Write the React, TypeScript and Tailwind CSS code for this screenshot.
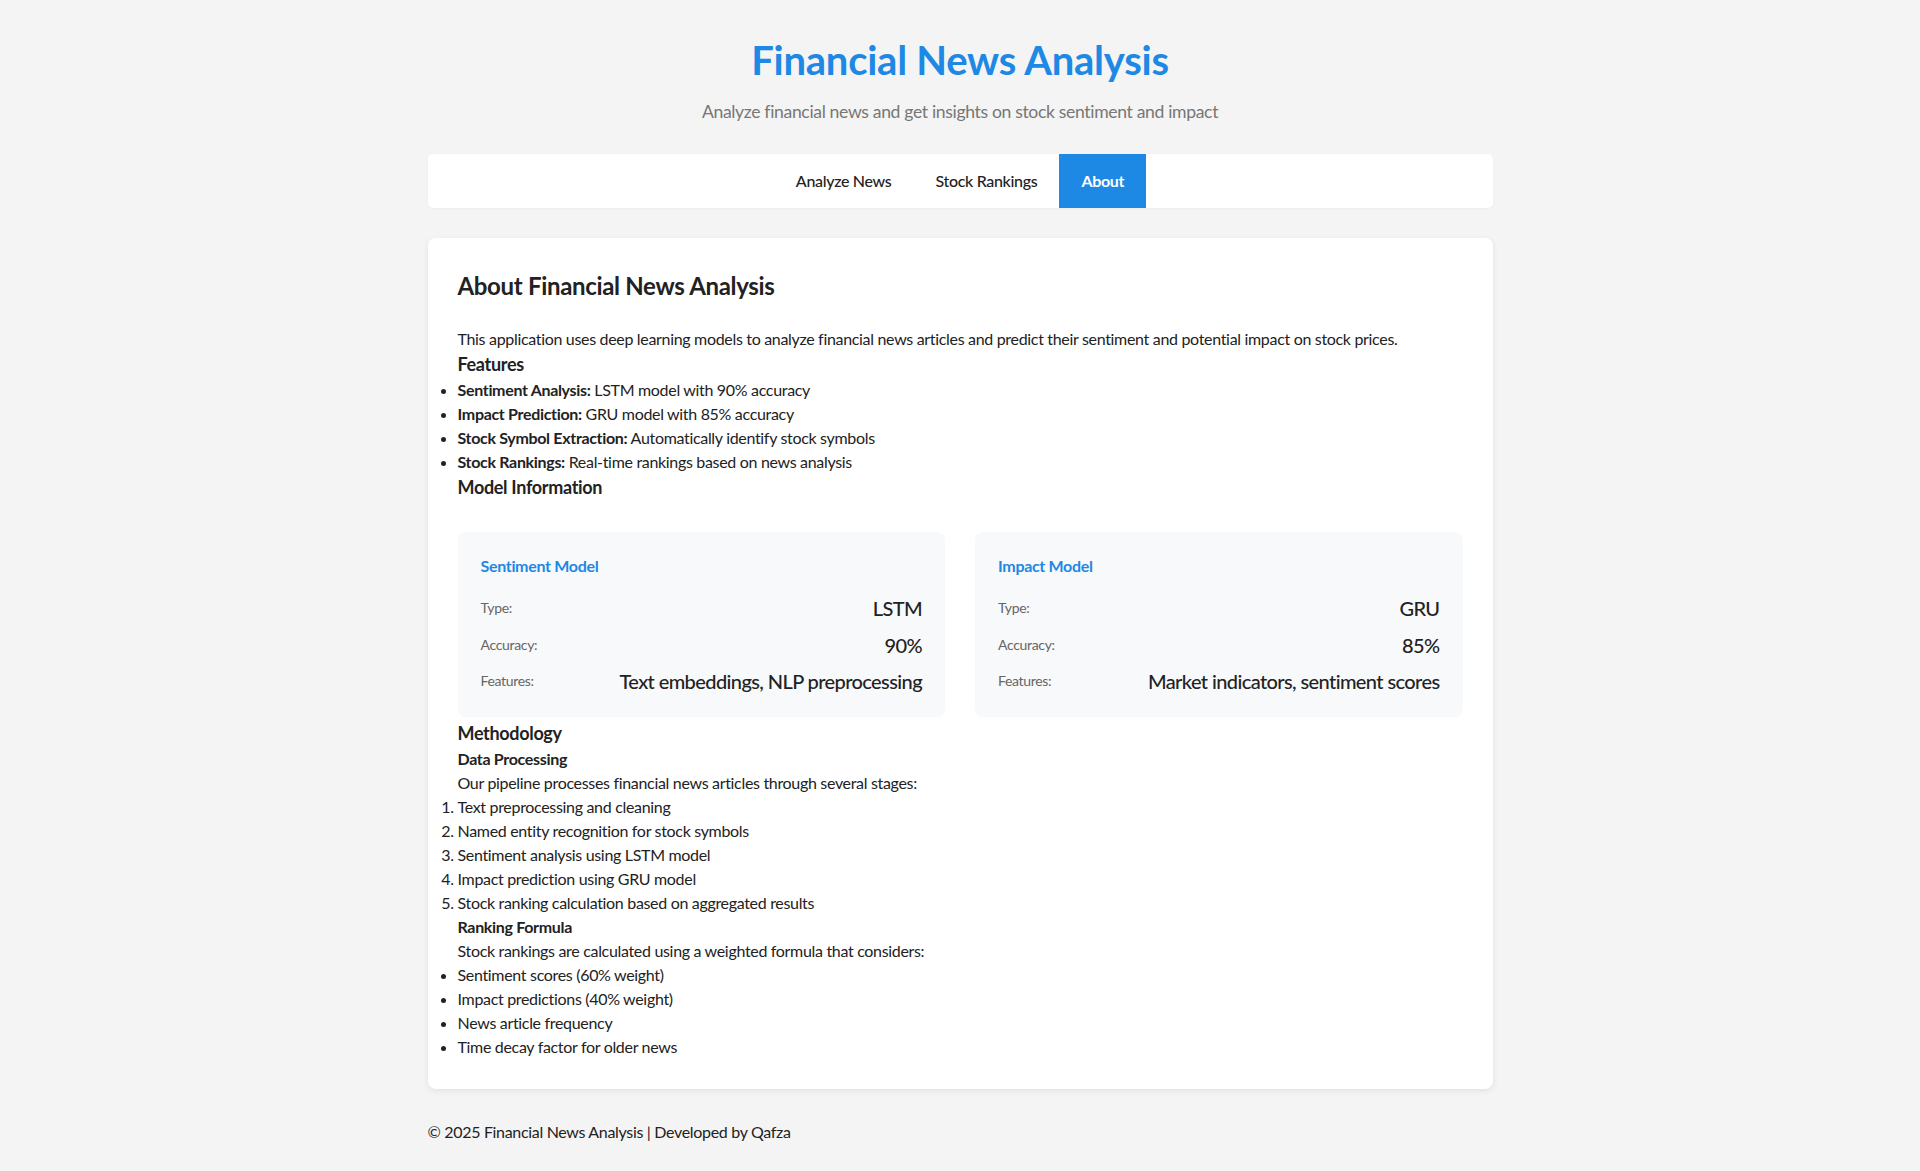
import React from 'react';

const tabs = [
  { id: 'analyze', label: 'Analyze News' },
  { id: 'rankings', label: 'Stock Rankings' },
  { id: 'about', label: 'About' },
];

const models = [
  {
    title: 'Sentiment Model',
    rows: [
      { label: 'Type:', value: 'LSTM' },
      { label: 'Accuracy:', value: '90%' },
      { label: 'Features:', value: 'Text embeddings, NLP preprocessing' },
    ],
  },
  {
    title: 'Impact Model',
    rows: [
      { label: 'Type:', value: 'GRU' },
      { label: 'Accuracy:', value: '85%' },
      { label: 'Features:', value: 'Market indicators, sentiment scores' },
    ],
  },
];

function ModelCard({ title, rows }: { title: string; rows: { label: string; value: string }[] }) {
  return (
    <div className="bg-[#f8f9fa] rounded-[8px] px-[23px] pt-[22px] pb-[17px]">
      <h4 className="text-[16px] leading-[24px] font-bold text-[#1e88e5] mb-[12px]">{title}</h4>
      {rows.map((row) => (
        <div key={row.label} className="flex items-center justify-between h-[36.5px]">
          <span className="text-[14px] text-[#666]">{row.label}</span>
          <span className="text-[20px] font-medium text-[#222] tracking-[-0.6px]">{row.value}</span>
        </div>
      ))}
    </div>
  );
}

export default function App() {
  const active = 'about';

  return (
    <div className="min-h-screen bg-[#f4f4f4] text-[#222] tracking-[-0.32px] font-['Lato','Liberation_Sans',sans-serif]">
      <div className="mx-auto w-[1065px] pt-[36px] pb-[26px]">
        <header className="text-center mb-[29px]">
          <h1 className="text-[40px] leading-[48px] font-bold text-[#1e88e5] tracking-[-0.25px]">
            Financial News Analysis
          </h1>
          <p className="mt-[15px] text-[17.6px] leading-[26px] text-[#777] tracking-[-0.35px]">
            Analyze financial news and get insights on stock sentiment and impact
          </p>
        </header>

        <nav className="flex justify-center bg-white rounded-[5px] h-[54px] shadow-[0_1px_2px_rgba(0,0,0,0.03)]">
          {tabs.map((tab) => (
            <button
              key={tab.id}
              className={
                tab.id === active
                  ? 'h-full px-[22px] text-[16px] font-bold bg-[#1e88e5] text-white'
                  : 'h-full px-[22px] text-[16px] font-medium text-[#222]'
              }
            >
              {tab.label}
            </button>
          ))}
        </nav>

        <main className="mt-[30px] bg-white rounded-[8px] shadow-[0_2px_6px_rgba(0,0,0,0.08)] p-[30px] text-[16px] leading-[24px]">
          <h2 className="text-[24px] leading-[36px] font-bold mb-[23px]">About Financial News Analysis</h2>
          <p>
            This application uses deep learning models to analyze financial news articles and predict their
            sentiment and potential impact on stock prices.
          </p>

          <h3 className="text-[18px] leading-[27px] font-bold">Features</h3>
          <ul className="list-disc">
            <li>
              <strong>Sentiment Analysis:</strong> LSTM model with 90% accuracy
            </li>
            <li>
              <strong>Impact Prediction:</strong> GRU model with 85% accuracy
            </li>
            <li>
              <strong>Stock Symbol Extraction:</strong> Automatically identify stock symbols
            </li>
            <li>
              <strong>Stock Rankings:</strong> Real-time rankings based on news analysis
            </li>
          </ul>

          <h3 className="text-[18px] leading-[27px] font-bold">Model Information</h3>
          <div className="grid grid-cols-2 gap-[30px] mt-[31px] mb-[3px]">
            {models.map((m) => (
              <ModelCard key={m.title} title={m.title} rows={m.rows} />
            ))}
          </div>

          <h3 className="text-[18px] leading-[27px] font-bold">Methodology</h3>
          <h4 className="font-bold">Data Processing</h4>
          <p>Our pipeline processes financial news articles through several stages:</p>
          <ol className="list-decimal">
            <li>Text preprocessing and cleaning</li>
            <li>Named entity recognition for stock symbols</li>
            <li>Sentiment analysis using LSTM model</li>
            <li>Impact prediction using GRU model</li>
            <li>Stock ranking calculation based on aggregated results</li>
          </ol>
          <h4 className="font-bold">Ranking Formula</h4>
          <p>Stock rankings are calculated using a weighted formula that considers:</p>
          <ul className="list-disc">
            <li>Sentiment scores (60% weight)</li>
            <li>Impact predictions (40% weight)</li>
            <li>News article frequency</li>
            <li>Time decay factor for older news</li>
          </ul>
        </main>

        <footer className="mt-[31px] text-[16px] leading-[24px]">
          © 2025 Financial News Analysis | Developed by Qafza
        </footer>
      </div>
    </div>
  );
}
